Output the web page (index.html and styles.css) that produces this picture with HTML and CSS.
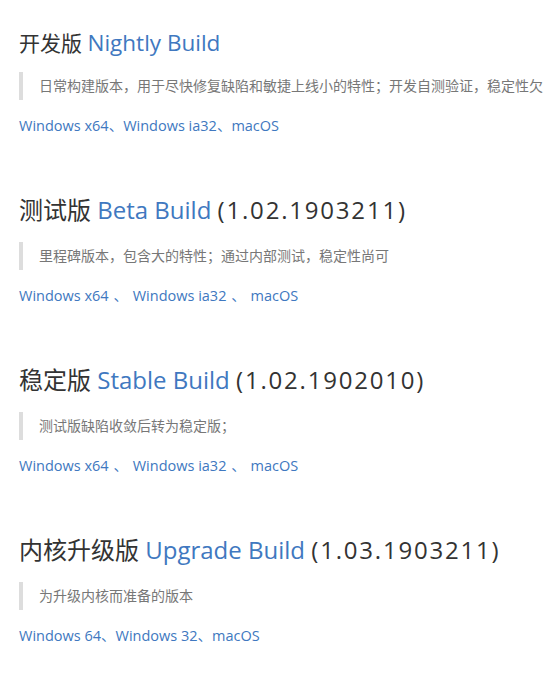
FILE: index.html
```html
<!DOCTYPE html>
<html lang="zh-CN">
<head>
    <meta charset="UTF-8">
    <title>版本下载</title>
    <link rel="stylesheet" href="styles.css">
</head>
<body>
    <main class="builds">
        <section class="build">
            <h2 class="build-title small">开发版 <a href="#">Nightly Build</a></h2>
            <blockquote>日常构建版本，用于尽快修复缺陷和敏捷上线小的特性；开发自测验证，稳定性欠</blockquote>
            <p class="downloads"><a href="#">Windows x64</a>、<a href="#">Windows ia32</a>、<a href="#">macOS</a></p>
        </section>

        <section class="build">
            <h2 class="build-title">测试版 <a href="#">Beta Build</a> <span class="version">(1.02.1903211)</span></h2>
            <blockquote>里程碑版本，包含大的特性；通过内部测试，稳定性尚可</blockquote>
            <p class="downloads"><a href="#">Windows x64</a> <span class="sep">、</span> <a href="#">Windows ia32</a> <span class="sep">、</span> <a href="#">macOS</a></p>
        </section>

        <section class="build">
            <h2 class="build-title">稳定版 <a href="#">Stable Build</a> <span class="version">(1.02.1902010)</span></h2>
            <blockquote>测试版缺陷收敛后转为稳定版；</blockquote>
            <p class="downloads"><a href="#">Windows x64</a> <span class="sep">、</span> <a href="#">Windows ia32</a> <span class="sep">、</span> <a href="#">macOS</a></p>
        </section>

        <section class="build">
            <h2 class="build-title">内核升级版 <a href="#">Upgrade Build</a> <span class="version">(1.03.1903211)</span></h2>
            <blockquote>为升级内核而准备的版本</blockquote>
            <p class="downloads"><a href="#">Windows 64</a>、<a href="#">Windows 32</a>、<a href="#">macOS</a></p>
        </section>
    </main>
</body>
</html>
```

FILE: styles.css
```css
body {
    font-family: "Open Sans", "Noto Sans CJK SC", sans-serif;
    color: #333;
    background-color: #fff;
    margin: 0;
    overflow: hidden;
}

.builds {
    padding: 28px 0 0 19px;
}

.build {
    margin-bottom: 56px;
}

a {
    color: #4078c0;
    text-decoration: none;
}

.build-title {
    font-size: 24px;
    font-weight: normal;
    line-height: 36px;
    margin: 0 0 14px;
    white-space: nowrap;
}

.build-title .version {
    letter-spacing: 1.8px;
}

.build-title.small {
    font-size: 21px;
    line-height: 30px;
}

.build-title.small a {
    font-size: 22.5px;
}

blockquote {
    margin: 0 0 16px;
    padding-left: 16px;
    border-left: 4px solid #ddd;
    color: #777;
    font-size: 14px;
    line-height: 28px;
    white-space: nowrap;
}

.downloads {
    margin: 0;
    font-size: 14.5px;
    line-height: 20px;
    color: #4078c0;
    white-space: nowrap;
}

.downloads .sep {
    margin: 0 1px;
}
```
